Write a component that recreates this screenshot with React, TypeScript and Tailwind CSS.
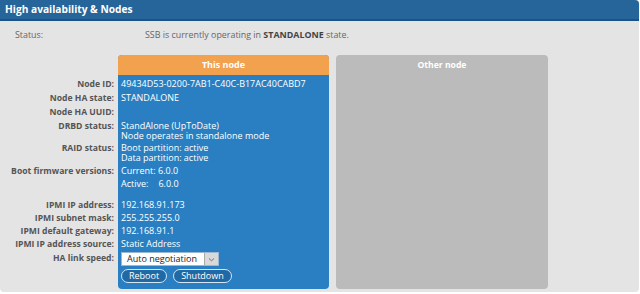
import React from "react";

const font = { fontFamily: '"Open Sans", "DejaVu Sans", sans-serif' };

function L({ h, children, pt = "" }: { h: string; children?: React.ReactNode; pt?: string }) {
  return (
    <div className={`${h} ${pt} flex items-start justify-end pr-[4px] whitespace-nowrap`}>
      {children}
    </div>
  );
}

export default function App() {
  return (
    <div className="w-[640px] h-[294px] bg-white" style={font}>
      <div className="w-[639px] h-[292px] flex flex-col rounded-tr-[4px] rounded-b-[4px] overflow-hidden bg-[#e4e4e4]">
        <div className="h-[21px] bg-[#26659a] border-b-2 border-[#1d5286] flex items-center pl-[5px] text-white font-bold text-[10.2px]">
          High availability &amp; Nodes
        </div>
        <div className="flex text-[8.9px] text-[#666] pt-[7px] h-[26px]">
          <div className="w-[145px] pl-[15px]">Status:</div>
          <div>
            SSB is currently operating in <b className="text-[#444]">STANDALONE</b> state.
          </div>
        </div>
        <div className="flex pt-[8px]">
          <div className="w-[118px] pt-[20px] flex flex-col text-[8.6px] font-bold text-[#555] leading-[10px]">
            <L h="h-[16px]" pt="pt-[4px]">Node ID:</L>
            <L h="h-[14px]" pt="pt-[2px]">Node HA state:</L>
            <L h="h-[14px]" pt="pt-[2px]">Node HA UUID:</L>
            <L h="h-[22px]" pt="pt-[2px]">DRBD status:</L>
            <L h="h-[23px]" pt="pt-[2px]">RAID status:</L>
            <L h="h-[13px]" pt="pt-[2px]">Boot firmware versions:</L>
            <L h="h-[13px]" />
            <L h="h-[8px]" />
            <L h="h-[13px]" pt="pt-[2px]">IPMI IP address:</L>
            <L h="h-[13px]" pt="pt-[2px]">IPMI subnet mask:</L>
            <L h="h-[13px]" pt="pt-[2px]">IPMI default gateway:</L>
            <L h="h-[13px]" pt="pt-[2px]">IPMI IP address source:</L>
            <L h="h-[17px]" pt="pt-[3px]">HA link speed:</L>
          </div>
          <div className="w-[211px] h-[234px] rounded-[4px] overflow-hidden bg-[#2a7fc2] flex flex-col">
            <div className="h-[20px] bg-[#f2a24f] flex items-center justify-center text-white font-bold text-[9px]">
              This node
            </div>
            <div className="pl-[3px] pt-[2px] text-white text-[9px] leading-[10px] flex flex-col">
              <div className="h-[14px] pt-[2px]">49434D53-0200-7AB1-C40C-B17AC40CABD7</div>
              <div className="h-[14px] pt-[2px]">STANDALONE</div>
              <div className="h-[14px]" />
              <div className="h-[22px] pt-[2px]">
                <div className="h-[10px]">StandAlone (UpToDate)</div>
                <div className="h-[10px]">Node operates in standalone mode</div>
              </div>
              <div className="h-[23px] pt-[2px]">
                <div className="h-[10px]">Boot partition: active</div>
                <div className="h-[10px]">Data partition: active</div>
              </div>
              <div className="h-[13px] pt-[2px]">Current: 6.0.0</div>
              <div className="h-[13px] pt-[2px]">
                Active:<span className="pl-[10px]">6.0.0</span>
              </div>
              <div className="h-[8px]" />
              <div className="h-[13px] pt-[2px]">192.168.91.173</div>
              <div className="h-[13px] pt-[2px]">255.255.255.0</div>
              <div className="h-[13px] pt-[2px]">192.168.91.1</div>
              <div className="h-[13px] pt-[2px]">Static Address</div>
              <div className="h-[17px] pt-[2px]">
                <div className="w-[98px] h-[14px] bg-white flex items-stretch border border-[#9bb8d3]">
                  <div className="flex-1 text-[#222] pl-[5px] flex items-center text-[9px]">Auto negotiation</div>
                  <div className="w-[14px] bg-[#d9d9d9] border-l border-[#aaa] flex items-center justify-center">
                    <svg width="7" height="5" viewBox="0 0 7 5">
                      <path d="M1 1.5 L3.5 3.8 L6 1.5" fill="none" stroke="#666" strokeWidth="0.9" />
                    </svg>
                  </div>
                </div>
              </div>
              <div className="h-[17px] pt-[2px] flex gap-[6px]">
                <div className="h-[14px] px-[7px] rounded-full border border-[#d6e6f5] bg-[#1f6aa6] flex items-center text-white text-[9px]">
                  Reboot
                </div>
                <div className="h-[14px] px-[7px] rounded-full border border-[#d6e6f5] bg-[#1f6aa6] flex items-center text-white text-[9px]">
                  Shutdown
                </div>
              </div>
            </div>
          </div>
          <div className="w-[212px] h-[234px] ml-[7px] rounded-[4px] bg-[#bbbbbb] flex justify-center pt-[4px] text-white font-bold text-[8.6px]">
            Other node
          </div>
        </div>
      </div>
    </div>
  );
}
